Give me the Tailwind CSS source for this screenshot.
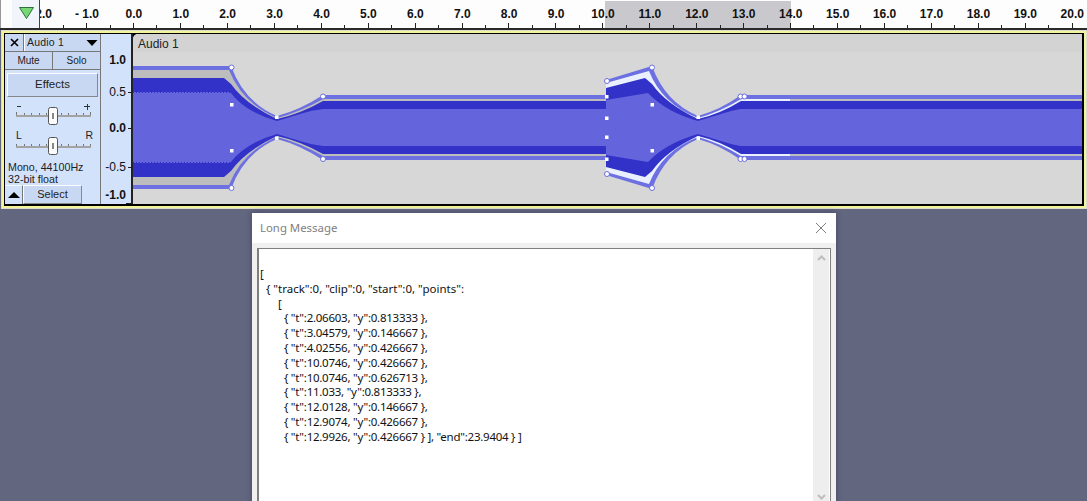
<!DOCTYPE html>
<html>
<head>
<meta charset="utf-8">
<script src="https://cdn.jsdelivr.net/npm/@tailwindcss/browser@4"></script>
</head>
<body class="m-0">
<div class="relative w-[1087px] h-[501px] overflow-hidden bg-[#62667f] font-['Liberation_Sans',Arial,sans-serif] text-[#111]">

  <!-- Timeline ruler -->
  <div class="relative h-[30px] bg-[#fdfdfd] border-b-2 border-[#2a2a2a] overflow-hidden">
    <div class="absolute left-[605px] top-px w-[186px] h-[27px] bg-[#c9c9cd]"></div>
    <div class="relative flex pl-[16.5px] pt-[7px] h-[22px] text-[12px] leading-[14px] font-bold whitespace-nowrap">
      <span class="w-[46.93px] shrink-0 text-center">- 2.0</span>
      <span class="w-[46.93px] shrink-0 text-center">- 1.0</span>
      <span class="w-[46.93px] shrink-0 text-center">0.0</span>
      <span class="w-[46.93px] shrink-0 text-center">1.0</span>
      <span class="w-[46.93px] shrink-0 text-center">2.0</span>
      <span class="w-[46.93px] shrink-0 text-center">3.0</span>
      <span class="w-[46.93px] shrink-0 text-center">4.0</span>
      <span class="w-[46.93px] shrink-0 text-center">5.0</span>
      <span class="w-[46.93px] shrink-0 text-center">6.0</span>
      <span class="w-[46.93px] shrink-0 text-center">7.0</span>
      <span class="w-[46.93px] shrink-0 text-center">8.0</span>
      <span class="w-[46.93px] shrink-0 text-center">9.0</span>
      <span class="w-[46.93px] shrink-0 text-center">10.0</span>
      <span class="w-[46.93px] shrink-0 text-center">11.0</span>
      <span class="w-[46.93px] shrink-0 text-center">12.0</span>
      <span class="w-[46.93px] shrink-0 text-center">13.0</span>
      <span class="w-[46.93px] shrink-0 text-center">14.0</span>
      <span class="w-[46.93px] shrink-0 text-center">15.0</span>
      <span class="w-[46.93px] shrink-0 text-center">16.0</span>
      <span class="w-[46.93px] shrink-0 text-center">17.0</span>
      <span class="w-[46.93px] shrink-0 text-center">18.0</span>
      <span class="w-[46.93px] shrink-0 text-center">19.0</span>
      <span class="w-[46.93px] shrink-0 text-center">20.0</span>
    </div>
    <svg class="absolute left-0 top-0" width="1087" height="28" viewBox="0 0 1087 28" shape-rendering="crispEdges">
      <path stroke="#222" stroke-width="1" fill="none" d="M86.5 23V28M133.5 23V28M180.5 23V28M227.5 23V28M274.5 23V28M321.5 23V28M368.5 23V28M415.5 23V28M462.5 23V28M508.5 23V28M555.5 23V28M602.5 23V28M649.5 23V28M696.5 23V28M743.5 23V28M790.5 23V28M837.5 23V28M884.5 23V28M931.5 23V28M978.5 23V28M1025.5 23V28M1072.5 23V28"/>
      <path stroke="#222" stroke-width="1" fill="none" d="M63.5 25V28M110.5 25V28M156.5 25V28M203.5 25V28M250.5 25V28M297.5 25V28M344.5 25V28M391.5 25V28M438.5 25V28M485.5 25V28M532.5 25V28M579.5 25V28M626.5 25V28M673.5 25V28M720.5 25V28M767.5 25V28M813.5 25V28M860.5 25V28M907.5 25V28M954.5 25V28M1001.5 25V28M1048.5 25V28"/>
    </svg>
    <!-- Corner with play-head marker -->
    <div class="absolute left-[12px] top-0 w-[28px] h-[28px] bg-[#f1f4fb] border-r border-[#444]">
      <svg width="27" height="28" viewBox="12 0 27 28">
        <path d="M19.5 7.5H33.5L26.5 18.5Z" fill="#74d874" stroke="#2f6f3a" stroke-width="1"/>
      </svg>
    </div>
    <div class="absolute left-0 top-0 w-px h-[28px] bg-[#999]"></div>
  </div>

  <!-- Track -->
  <div class="ml-px pt-px bg-[#dcdccf] pb-px pl-px pr-px">
    <div class="border-2 border-[#f3f39b]">
      <div class="flex h-[173px] border-t border-b-2 border-l border-r-2 border-black bg-black">

        <!-- Track control panel -->
        <div class="w-[96px] shrink-0 bg-[#d2e2fb] border-r border-[#777] flex flex-col text-[11px]">
          <div class="flex h-[18px] shrink-0 border-b border-[#777] bg-[#c9d8f2]">
            <div class="w-[19px] flex items-center justify-center border-r border-[#777]">
              <svg width="9" height="9" viewBox="0 0 9 9"><path d="M1 1L8 8M8 1L1 8" stroke="#000" stroke-width="1.6"/></svg>
            </div>
            <div class="flex-1 flex items-center justify-between pl-[2px] pr-[2px] border-l border-white text-[10.5px]">
              <span class="text-[#222] tracking-[0.02em]">Audio 1</span>
              <svg width="12" height="6" viewBox="0 0 12 6"><path d="M0.5 0H11.5L6 6Z" fill="#000"/></svg>
            </div>
          </div>
          <div class="flex h-[18px] shrink-0 border-b border-[#777] bg-[#c9d8f2] text-[10px] text-[#222]">
            <div class="w-[48px] flex items-center justify-center border-r border-[#777]">Mute</div>
            <div class="flex-1 flex items-center justify-center">Solo</div>
          </div>
          <div class="mx-[2px] mt-[3px] h-[24px] w-[91px] shrink-0 flex items-center justify-center bg-[#c9d8f2] border border-[#888] border-t-white border-l-white text-[11.5px] text-[#222]">Effects</div>

          <!-- Gain slider -->
          <div class="relative h-[28px] mt-[4px] shrink-0 text-[11px] leading-[11px] text-[#222]">
            <svg class="block" width="95" height="28" viewBox="0 0 95 28" shape-rendering="crispEdges">
              <path d="M12 5.5H16" stroke="#333"/>
              <path d="M79 5.5H85M82 2.5V8.5" stroke="#333"/>
              <rect x="11" y="14" width="75" height="2" fill="#a3a3a3"/>
              <path d="M11.5 11V14M19.5 12V14M26.5 12V14M34.5 12V14M41.5 12V14M56.5 12V14M63.5 12V14M71.5 12V14M78.5 12V14M85.5 11V14" stroke="#777"/>
            </svg>
            <svg class="absolute left-[42px] top-[6px]" width="12" height="18" viewBox="0 0 12 18"><rect x="1.5" y="0.5" width="9" height="17" rx="2" fill="#fbfbfb" stroke="#555"/><rect x="5" y="6" width="2" height="6" fill="#888"/></svg>
          </div>
          <!-- Pan slider -->
          <div class="relative h-[28px] mt-px shrink-0 leading-[11px] text-[#222]">
            <div class="flex justify-between pl-[11px] pr-[7px] text-[10.5px] h-[14px]"><span>L</span><span>R</span></div>
            <svg class="block" width="95" height="10" viewBox="0 14 95 10" shape-rendering="crispEdges">
              <rect x="11" y="16" width="75" height="2" fill="#a3a3a3"/>
              <path d="M11.5 14V16M19.5 14V16M26.5 14V16M34.5 14V16M41.5 14V16M56.5 14V16M63.5 14V16M71.5 14V16M78.5 14V16M85.5 14V16" stroke="#777"/>
            </svg>
            <svg class="absolute left-[42px] top-[7px]" width="12" height="18" viewBox="0 0 12 18"><rect x="1.5" y="0.5" width="9" height="17" rx="2" fill="#fbfbfb" stroke="#555"/><rect x="5" y="6" width="2" height="6" fill="#888"/></svg>
          </div>

          <div class="pl-[3px] mt-[3px] text-[10.7px] leading-[12px] text-[#222] whitespace-nowrap shrink-0">Mono, 44100Hz<br>32-bit float</div>
          <div class="flex h-[19px] mt-auto shrink-0">
            <div class="w-[18px] flex items-center justify-center bg-[#d2e2fb] border-t border-[#f4f7fd] border-r border-r-[#777]">
              <svg width="12" height="6" viewBox="0 0 12 6"><path d="M6 0L12 6H0Z" fill="#000"/></svg>
            </div>
            <div class="w-[59px] flex items-center justify-center bg-[#c9d8f2] border border-white border-r-[#888] border-b-[#888] text-[11px] text-[#222]">Select</div>
          </div>
        </div>

        <!-- Vertical amplitude ruler -->
        <div class="w-[30px] shrink-0 bg-[#d2e2fb] flex flex-col pt-[19px] text-[12px] leading-[14px] text-[#111] border-r-2 border-[#222] box-content">
          <div class="h-[14px] flex justify-end pr-[5px] font-bold">1.0</div>
          <div class="h-[14px] mt-[18px] flex items-center justify-end gap-[2px]"><span>0.5</span><i class="w-[3px] h-px bg-[#222]"></i></div>
          <div class="h-[14px] mt-[22px] flex items-center justify-end gap-[2px] font-bold"><span>0.0</span><i class="w-[3px] h-px bg-[#222]"></i></div>
          <div class="h-[14px] mt-[25px] flex items-center justify-end gap-[2px]"><span>-0.5</span><i class="w-[3px] h-px bg-[#222]"></i></div>
          <div class="h-[14px] mt-[14px] flex justify-end pr-[5px] font-bold">-1.0</div>
          <i class="block self-end w-[5px] h-px mt-[1px] bg-[#222]"></i>
        </div>

        <!-- Waveform canvas -->
        <div class="relative flex-1 min-w-0 bg-[#d7d7d7] rounded-tl-[5px] overflow-hidden">
          <svg class="block" width="950" height="170" viewBox="133 34 950 170">
            <rect x="133" y="34" width="950" height="18" fill="#d3d3d3"/>
            <g id="half">
              <path d="M133 66H231Q244 102 277 116Q300 110 323 95H606V80L652 66Q665 102 698 116Q720 110 741 95H1083V128H133Z" fill="#6d70e0"/>
              <path d="M133 70H229Q242 103 277 118Q300 112 323 99H606V128H133Z" fill="#bdbdbd"/>
              <path d="M606 83L649 71Q662 104 698 118Q720 112 741 99H790V128H606Z" fill="#eaf0ff"/>
              <rect x="790" y="99" width="293" height="29" fill="#bdbdbd"/>
              <path d="M133 78H224L231 84Q245 104 277 119Q300 114 323 101H606V128H133Z" fill="#3232c8"/>
              <path d="M606 88L645 78L652 84Q666 104 698 119Q720 114 741 101H1083V128H606Z" fill="#3232c8"/>
              <path d="M133 92H230Q245 112 277 121L300 114Q312 110 323 109H606V128H133Z" fill="#6464dc"/>
              <path d="M606 100L648 93Q666 112 698 121L721 114Q733 110 741 109H1083V128H606Z" fill="#6464dc"/>
              <path d="M133 92.5H230" stroke="#3232c8" stroke-width="1" stroke-dasharray="1 2"/>
            </g>
            <use href="#half" transform="matrix(1 0 0 -1 0 255)"/>
            <g fill="#fff" stroke="#6a6ee0" stroke-width="1">
              <circle cx="231.5" cy="67.5" r="2.5"/><circle cx="231.5" cy="188" r="2.5"/>
              <circle cx="323" cy="96.5" r="2.5"/><circle cx="323" cy="159" r="2.5"/>
              <circle cx="607" cy="81" r="2.5"/><circle cx="607" cy="174" r="2.5"/>
              <circle cx="652" cy="67.5" r="2.5"/><circle cx="652" cy="188" r="2.5"/>
              <circle cx="740.5" cy="96.5" r="2.5"/><circle cx="744.5" cy="96.5" r="2.5"/>
              <circle cx="740.5" cy="159" r="2.5"/><circle cx="744.5" cy="159" r="2.5"/>
            </g>
            <g fill="#fff">
              <rect x="230" y="103" width="3.5" height="3.5"/><rect x="230" y="149" width="3.5" height="3.5"/>
              <rect x="275" y="115.5" width="3.5" height="3.5"/><rect x="275" y="136.5" width="3.5" height="3.5"/>
              <rect x="605" y="95" width="3.5" height="3.5"/><rect x="605" y="116.5" width="3.5" height="3.5"/>
              <rect x="605" y="135.5" width="3.5" height="3.5"/><rect x="605" y="157.5" width="3.5" height="3.5"/>
              <rect x="650.5" y="103" width="3.5" height="3.5"/><rect x="650.5" y="149" width="3.5" height="3.5"/>
              <rect x="696.5" y="115.5" width="3.5" height="3.5"/><rect x="696.5" y="136.5" width="3.5" height="3.5"/>
            </g>
          </svg>
          <span class="absolute left-[5px] top-[3px] text-[12px] leading-[14px] text-[#222]">Audio 1</span>
        </div>
      </div>
    </div>
  </div>

  <!-- Long Message dialog -->
  <div class="absolute left-[252px] top-[213px] w-[584px] h-[320px] bg-[#f0f0f0] shadow-[0_0_6px_rgba(30,32,50,0.45)] font-['Noto_Sans',sans-serif]">
    <div class="h-[30px] bg-white flex items-center justify-between pl-[8px] pr-[9px]">
      <span class="text-[11.4px] text-[#808080]">Long Message</span>
      <svg width="12" height="12" viewBox="0 0 12 12"><path d="M1 1L11 11M11 1L1 11" stroke="#7d7d7d" stroke-width="1"/></svg>
    </div>
    <div class="mx-[5px] mt-[5px] h-[280px] bg-white border-2 border-[#7f7f7f] border-r border-t flex">
      <pre class="flex-1 pl-px pt-[18px] text-[11.5px] leading-[14.8px] text-[#111] font-['Noto_Sans',sans-serif]">[
  { "track":0, "clip":0, "start":0, "points":
      [<span class="block pl-[2px] tracking-[-0.25px]">        { "t":2.06603, "y":0.813333 },
        { "t":3.04579, "y":0.146667 },
        { "t":4.02556, "y":0.426667 },
        { "t":10.0746, "y":0.426667 },
        { "t":10.0746, "y":0.626713 },
        { "t":11.033, "y":0.813333 },
        { "t":12.0128, "y":0.146667 },
        { "t":12.9074, "y":0.426667 },
        { "t":12.9926, "y":0.426667 } ], "end":23.9404 } ]</span></pre>
      <div class="w-[16px] mr-px bg-[#eeeeee] flex flex-col justify-between items-center py-[6px] h-[252px] pb-[1px]">
        <svg width="9" height="6" viewBox="0 0 9 6"><path d="M1 5L4.5 1.5L8 5" fill="none" stroke="#bdbdbd" stroke-width="2"/></svg>
        <svg width="9" height="6" viewBox="0 0 9 6"><path d="M1 1L4.5 4.5L8 1" fill="none" stroke="#bdbdbd" stroke-width="2"/></svg>
      </div>
    </div>
  </div>
</div>
</body>
</html>
